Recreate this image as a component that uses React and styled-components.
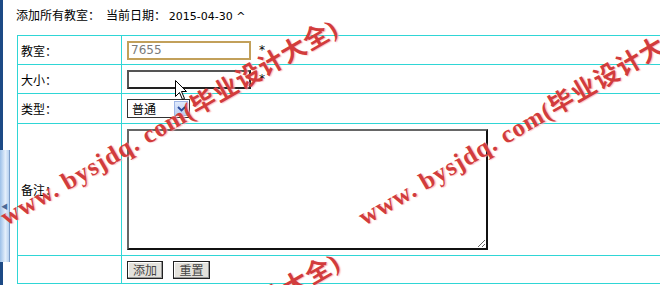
import React from "react";
import styled, { createGlobalStyle } from "styled-components";

const GlobalStyle = createGlobalStyle`
  html, body { margin: 0; padding: 0; background: #fff; overflow: hidden; }
  body { font-family: "Noto Sans CJK SC", "DejaVu Sans", sans-serif; font-size: 12px; color: #000; }
`;

const LINE = "#2fd6d6";

const Page = styled.div`
  position: relative;
  width: 660px;
  height: 285px;
  overflow: hidden;
  display: flex;
  background: #fff;
`;

const FrameEdge = styled.div`
  width: 3px;
  flex-shrink: 0;
  background: #1d4a85;
`;

const SideHandle = styled.div`
  position: absolute;
  left: 0;
  top: 150px;
  width: 9px;
  height: 112px;
  background: linear-gradient(90deg, #9cc0e8, #e4effb 60%, #b8d2f0);
  border-right: 1px solid #7a9cc8;
  display: flex;
  align-items: center;
  justify-content: center;
  color: #4a6a98;
  font-size: 7px;
`;

const Main = styled.div`
  flex: 1;
  padding: 7px 0 0 14px;
`;

const Title = styled.div`
  height: 16px;
  line-height: 16px;
  margin: 0 0 12px -1px;
  font-size: 12px;
  white-space: nowrap;
  display: flex;
  gap: 6px;
`;

const DateText = styled.span`
  font-family: "DejaVu Sans", sans-serif;
  font-size: 11px;
`;

const FormTable = styled.table`
  border-collapse: separate;
  border-spacing: 1px;
  table-layout: fixed;
  width: 700px;
  background: ${LINE};
`;

const Cell = styled.td`
  border: 0;
  background: #fff;
  padding: 0 0 0 ${(p) => (p.$label ? 3 : 5)}px;
  height: ${(p) => p.$h}px;
  vertical-align: middle;
  white-space: nowrap;
  font-size: 12px;
  box-sizing: border-box;
`;

const FieldRow = styled.div`
  display: flex;
  align-items: center;
  gap: 8px;
`;

const TextInput = styled.input`
  box-sizing: border-box;
  width: 124px;
  height: 19px;
  margin: 0;
  padding: 0 2px;
  font-family: "DejaVu Sans", sans-serif;
  font-size: 12px;
  color: #7a7a7a;
  background: #fff;
  outline: none;
  border: 2px solid ${(p) => (p.$focused ? "#c2a05a" : "#333")};
  ${(p) => (p.$focused ? "" : "border-color: #555 #222 #222 #555;")}
`;

const Star = styled.span`
  font-size: 12px;
  font-family: "DejaVu Sans", sans-serif;
`;

const SelectWrap = styled.span`
  position: relative;
  display: inline-flex;
  width: 63px;
  height: 19px;
`;

const Select = styled.select`
  appearance: none;
  -webkit-appearance: none;
  box-sizing: border-box;
  width: 100%;
  height: 100%;
  margin: 0;
  padding: 0 0 0 4px;
  border: 1px solid #333;
  background: #fff;
  font-family: "Noto Sans CJK SC", sans-serif;
  font-size: 12px;
  color: #000;
  outline: none;
`;

const SelectArrow = styled.span`
  position: absolute;
  right: 2px;
  top: 2px;
  width: 14px;
  height: 15px;
  background: linear-gradient(180deg, #dfe9fb, #b9cdf4);
  border: 1px solid #9fb6e6;
  box-sizing: border-box;
  display: flex;
  align-items: center;
  justify-content: center;
  pointer-events: none;
`;

const TextArea = styled.textarea`
  box-sizing: border-box;
  display: block;
  width: 361px;
  height: 121px;
  margin: 0;
  padding: 2px;
  border: 2px solid;
  border-color: #666 #111 #111 #666;
  outline: none;
  resize: both;
`;

const Button = styled.button`
  box-sizing: border-box;
  height: 18px;
  width: ${(p) => p.$w}px;
  padding: 0;
  margin: 0;
  border: 1px solid #222;
  box-shadow: inset -1px -1px 0 #999, inset 1px 1px 0 #fff;
  background: #e4e2dc;
  color: #444;
  font-family: "Noto Sans CJK SC", sans-serif;
  font-size: 12px;
  line-height: 14px;
`;

const ButtonRow = styled.div`
  display: flex;
  gap: 10px;
  align-items: center;
`;

const Cursor = styled.svg`
  position: absolute;
  left: 175px;
  top: 80px;
  pointer-events: none;
`;

const WatermarkText = styled.span`
  position: absolute;
  left: ${(p) => p.$x}px;
  top: ${(p) => p.$y - 30}px;
  height: 30px;
  line-height: 30px;
  transform: rotate(-30deg);
  transform-origin: 0 100%;
  white-space: nowrap;
  font-family: "Liberation Serif", "Noto Sans CJK SC", serif;
  font-weight: bold;
  font-size: 25px;
  color: #d23c3c;
  text-shadow: 1px 1px 1px rgba(255, 170, 170, 0.7);
  pointer-events: none;
  letter-spacing: 1px;
`;

const MARK = "www. bysjdq. com(毕业设计大全)";

export default function App() {
  return (
    <>
      <GlobalStyle />
      <Page>
        <FrameEdge />
        <SideHandle>◀</SideHandle>
        <Main>
          <Title>
            <span>添加所有教室：</span>
            <span>
              当前日期： <DateText>2015-04-30 ^</DateText>
            </span>
          </Title>
          <FormTable>
            <colgroup>
              <col style={{ width: 103 }} />
              <col />
            </colgroup>
            <tbody>
              <tr>
                <Cell $label $h={28}>教室：</Cell>
                <Cell $h={28}>
                  <FieldRow>
                    <TextInput $focused defaultValue="7655" />
                    <Star>*</Star>
                  </FieldRow>
                </Cell>
              </tr>
              <tr>
                <Cell $label $h={28}>大小：</Cell>
                <Cell $h={28}>
                  <FieldRow>
                    <TextInput defaultValue="" />
                    <Star>*</Star>
                  </FieldRow>
                </Cell>
              </tr>
              <tr>
                <Cell $label $h={29}>类型：</Cell>
                <Cell $h={29}>
                  <SelectWrap>
                    <Select defaultValue="普通">
                      <option>普通</option>
                      <option>多媒体</option>
                    </Select>
                    <SelectArrow>
                      <svg width="9" height="6" viewBox="0 0 9 6">
                        <path d="M1 1 L4.5 4.5 L8 1" fill="none" stroke="#2a4a9a" strokeWidth="1.8" />
                      </svg>
                    </SelectArrow>
                  </SelectWrap>
                </Cell>
              </tr>
              <tr>
                <Cell $label $h={131}>备注：</Cell>
                <Cell $h={131}>
                  <TextArea />
                </Cell>
              </tr>
              <tr>
                <Cell $label $h={27}></Cell>
                <Cell $h={27}>
                  <ButtonRow>
                    <Button $w={36}>添加</Button>
                    <Button $w={37}>重置</Button>
                  </ButtonRow>
                </Cell>
              </tr>
            </tbody>
          </FormTable>
        </Main>
        <Cursor width="13" height="21" viewBox="0 0 13 21">
          <path d="M0.5 0.5 L0.5 16.5 L4.5 12.5 L7.5 19.5 L9.5 18.5 L6.5 11.5 L11.5 11.5 Z" fill="#fff" stroke="#000" strokeWidth="1" />
        </Cursor>
        <WatermarkText $x={10} $y={232}>{MARK}</WatermarkText>
        <WatermarkText $x={368} $y={232}>{MARK}</WatermarkText>
        <WatermarkText $x={12} $y={466}>{MARK}</WatermarkText>
      </Page>
    </>
  );
}
